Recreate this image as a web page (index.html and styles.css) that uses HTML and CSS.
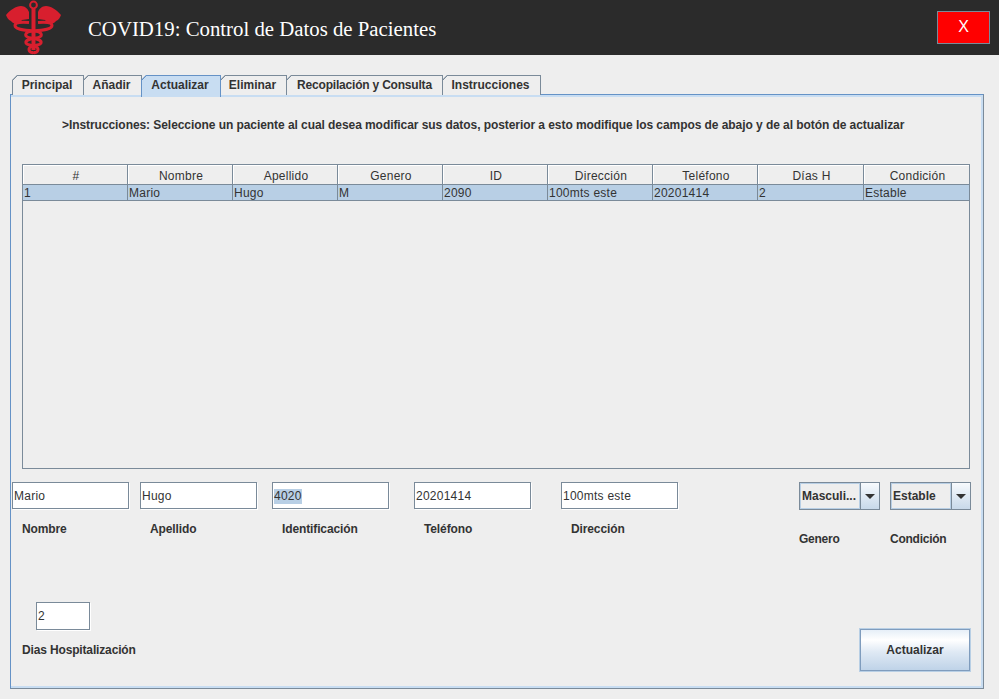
FILE: index.html
```html
<!DOCTYPE html>
<html>
<head>
    <meta charset="utf-8">
    <link rel="stylesheet" href="styles.css">
    <title>COVID19: Control de Datos de Pacientes</title>
</head>
<body>
    <header class="top-bar">
        <svg class="logo" width="56" height="55" viewBox="6 0 56 55">
            <defs>
                <g id="half-logo">
                    <path fill="#d81f2e" d="M6 15 C10 10 16 6 21 6 C25 6 28 9 29 12 L29 19 L22 20 C20 24 14 25 11 21 C8 20 7 17 6 15 Z"/>
                    <path fill="none" stroke="#d81f2e" stroke-width="3" d="M29 22.5 C22 22 15 22 15 25.5 C15 29 22 30 33.5 31 C44 32 43 37 36 38 C30 39 25 40 26 43 C27 46 38 45 38 49 C38 53 34 53 33 52"/>
                </g>
            </defs>
            <use href="#half-logo"/>
            <use href="#half-logo" transform="translate(67 0) scale(-1 1)"/>
            <rect x="31.5" y="9" width="4" height="41" fill="#d81f2e"/>
            <circle cx="33.5" cy="5" r="3.4" fill="none" stroke="#d81f2e" stroke-width="2"/>
        </svg>
        <h1 class="app-title">COVID19: Control de Datos de Pacientes</h1>
        <button class="close-button">X</button>
    </header>

    <main class="content">
        <nav class="tabs">
            <div class="tab tab-principal">Principal</div>
            <div class="tab tab-anadir">Añadir</div>
            <div class="tab tab-active">Actualizar</div>
            <div class="tab tab-eliminar">Eliminar</div>
            <div class="tab tab-consulta">Recopilación y Consulta</div>
            <div class="tab tab-instrucciones">Instrucciones</div>
        </nav>

        <section class="panel">
            <p class="instructions">&gt;Instrucciones: Seleccione un paciente al cual desea modificar sus datos, posterior a esto modifique los campos de abajo y de al botón de actualizar</p>

            <div class="table-box">
                <table class="patients">
                    <thead>
                        <tr>
                            <th>#</th>
                            <th>Nombre</th>
                            <th>Apellido</th>
                            <th>Genero</th>
                            <th>ID</th>
                            <th>Dirección</th>
                            <th>Teléfono</th>
                            <th>Días H</th>
                            <th>Condición</th>
                        </tr>
                    </thead>
                    <tbody>
                        <tr>
                            <td>1</td>
                            <td>Mario</td>
                            <td>Hugo</td>
                            <td>M</td>
                            <td>2090</td>
                            <td>100mts este</td>
                            <td>20201414</td>
                            <td>2</td>
                            <td>Estable</td>
                        </tr>
                    </tbody>
                </table>
            </div>

            <div class="fields">
                <div class="field">
                    <div class="text-box">Mario</div>
                    <label class="field-label">Nombre</label>
                </div>
                <div class="field">
                    <div class="text-box">Hugo</div>
                    <label class="field-label">Apellido</label>
                </div>
                <div class="field">
                    <div class="text-box"><span class="selected-text">4020</span></div>
                    <label class="field-label">Identificación</label>
                </div>
                <div class="field">
                    <div class="text-box">20201414</div>
                    <label class="field-label">Teléfono</label>
                </div>
                <div class="field">
                    <div class="text-box">100mts este</div>
                    <label class="field-label">Dirección</label>
                </div>
                <div class="field">
                    <div class="combo">
                        <span class="combo-value">Masculi...</span>
                        <span class="combo-arrow"></span>
                    </div>
                    <label class="combo-label">Genero</label>
                </div>
                <div class="field">
                    <div class="combo">
                        <span class="combo-value">Estable</span>
                        <span class="combo-arrow"></span>
                    </div>
                    <label class="combo-label">Condición</label>
                </div>
            </div>

            <div class="bottom-row">
                <div class="days">
                    <div class="text-box days-box">2</div>
                    <label class="days-label">Dias Hospitalización</label>
                </div>
                <button class="update-button">Actualizar</button>
            </div>
        </section>
    </main>
</body>
</html>
```

FILE: styles.css
```css
* {
    box-sizing: border-box;
}

html, body {
    height: 100%;
}

body {
    margin: 0;
    background-color: #eeeeee;
    color: #333333;
    font-family: "Liberation Sans", Arial, sans-serif;
    font-size: 12px;
    overflow: hidden;
}

.top-bar {
    display: flex;
    align-items: center;
    height: 55px;
    padding: 0 9px 0 6px;
    background-color: #2b2b2b;
}

.logo {
    flex: none;
    margin-right: 26px;
}

.app-title {
    flex: 1;
    margin: 2px 0 0 0;
    color: #ffffff;
    font-family: "Liberation Serif", "Times New Roman", serif;
    font-size: 20.8px;
    font-weight: normal;
}

.close-button {
    width: 53px;
    height: 33px;
    margin-bottom: 1px;
    background-color: #ff0000;
    border: 1px solid #7a8a99;
    color: #ffffff;
    font-family: "Liberation Sans", Arial, sans-serif;
    font-size: 16px;
}

.content {
    padding: 20px 15px 0 10px;
}

.tabs {
    display: flex;
    height: 19px;
    padding-left: 2px;
}

.tab {
    height: 20px;
    margin-right: -1px;
    padding: 2px 2px 0 0;
    background: linear-gradient(135deg, #7a8a99 0 4.5px, #eeeeee 4.5px) border-box;
    border: 1px solid #7a8a99;
    border-bottom: 0;
    clip-path: polygon(0 5px, 5px 0, 100% 0, 100% 100%, 0 100%);
    font-weight: bold;
    text-align: center;
    z-index: 1;
}

.tab-principal { width: 72px; }
.tab-anadir { width: 59px; }
.tab-active {
    position: relative;
    width: 80px;
    height: 22px;
    background: linear-gradient(135deg, #6592c6 0 4.5px, #c8ddf2 4.5px) border-box;
    border-color: #6592c6;
    z-index: 2;
}
.tab-eliminar { width: 67px; }
.tab-consulta {
    width: 157px;
    padding-right: 0;
    letter-spacing: -0.2px;
}
.tab-instrucciones { width: 99px; }

.panel {
    height: 595px;
    padding: 0 0 0 1px;
    background-color: #eeeeee;
    border: 1px solid #6592c6;
    border-bottom-color: #7a8a99;
    border-right-color: #7a8a99;
    box-shadow: inset 0 2px 0 #c8ddf2, inset -2px -2px 0 #c8ddf2;
}

.instructions {
    margin: 0;
    padding: 23px 0 0 50px;
    height: 69px;
    font-weight: bold;
    letter-spacing: -0.065px;
    white-space: nowrap;
}

.table-box {
    width: 948px;
    height: 305px;
    margin-left: 10px;
    background-color: #eeeeee;
    border: 1px solid #7a8a99;
    border-top: 0;
}

.patients {
    width: 948px;
    margin-left: -1px;
    border-collapse: collapse;
    table-layout: fixed;
}

.patients th,
.patients td {
    padding: 0 1px;
    border: 1px solid #7a8a99;
    font-weight: normal;
    letter-spacing: 0.25px;
    white-space: nowrap;
    overflow: hidden;
}

.patients th {
    width: 105px;
    height: 20px;
    padding: 2px 0 0 2px;
    background-color: #eeeeee;
    box-shadow: inset 1px 1px 0 #ffffff;
    text-align: center;
}

.patients th:nth-child(8) {
    width: 106px;
}

.patients th:nth-child(9) {
    width: auto;
}

.patients td {
    height: 16px;
    background-color: #b8cfe5;
    line-height: 14px;
}

.fields {
    display: grid;
    grid-template-columns: 128px 132px 142px 147px 238px 91px 81px;
    margin: 13px 0 0 0;
}

.field {
    display: flex;
    flex-direction: column;
}

.text-box {
    width: 117px;
    height: 27px;
    padding-left: 1px;
    background-color: #ffffff;
    border: 1px solid #7a8a99;
    box-shadow: 1px 1px 0 #ffffff;
    letter-spacing: 0.25px;
    line-height: 27px;
}

.selected-text {
    display: inline-block;
    height: 15px;
    background-color: #b8cfe5;
    line-height: 15px;
}

.field-label {
    margin-top: 13px;
    padding-left: 10px;
    font-weight: bold;
    letter-spacing: -0.12px;
}

.combo {
    display: flex;
    width: 81px;
    height: 28px;
    background-color: #eeeeee;
    border: 1px solid #7a8a99;
}

.combo-value {
    flex: 1;
    padding-left: 1px;
    border: 1px solid #b8cfe5;
    font-weight: bold;
    line-height: 24px;
    white-space: nowrap;
}

.combo-arrow {
    display: flex;
    align-items: center;
    justify-content: center;
    width: 19px;
    background: linear-gradient(#f7fafd, #c8d9ea);
    border-left: 1px solid #7a8a99;
}

.combo-arrow::after {
    content: "";
    border-left: 5px solid transparent;
    border-right: 5px solid transparent;
    border-top: 5px solid #333333;
}

.combo-label {
    margin-top: 22px;
    font-weight: bold;
    letter-spacing: -0.25px;
}

.bottom-row {
    display: flex;
    justify-content: space-between;
    align-items: flex-start;
    margin-top: 56px;
}

.days {
    display: flex;
    flex-direction: column;
    padding-left: 10px;
}

.days-box {
    width: 54px;
    height: 28px;
    margin-left: 14px;
}

.days-label {
    margin-top: 13px;
    font-weight: bold;
    letter-spacing: -0.15px;
}

.update-button {
    width: 112px;
    height: 44px;
    margin: 26px 12px 0 0;
    background: linear-gradient(#e6eff8 0%, #ffffff 25%, #dfe9f4 55%, #bfd3e8 100%);
    border: 2px solid #7f9cbd;
    outline: 1px solid #b8cfe5;
    outline-offset: -1px;
    color: #333333;
    font-family: "Liberation Sans", Arial, sans-serif;
    font-size: 12px;
    font-weight: bold;
}
```
